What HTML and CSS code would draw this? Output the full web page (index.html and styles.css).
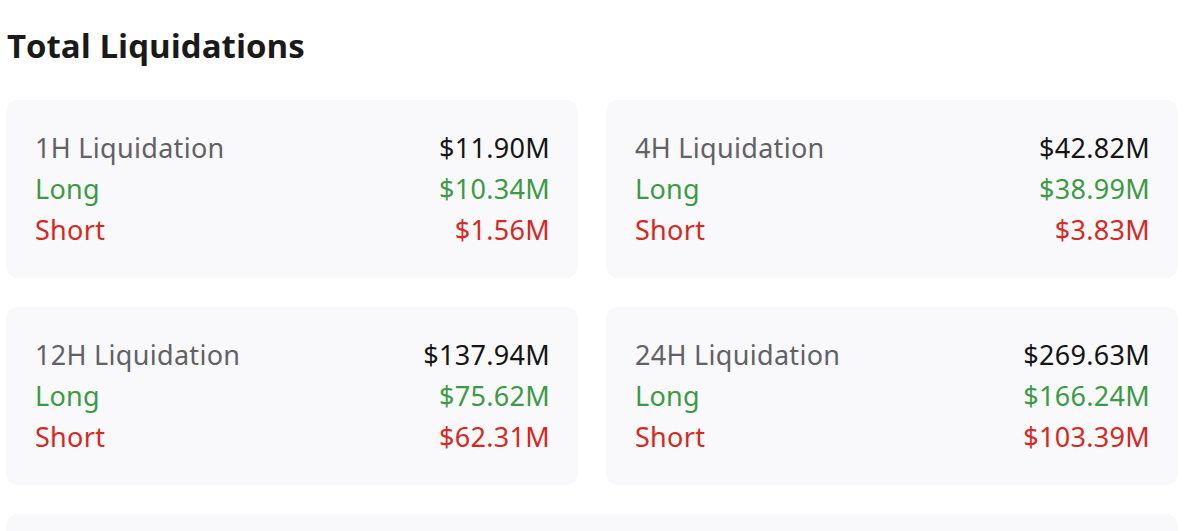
FILE: index.html
```html
<!DOCTYPE html>
<html lang="en">
<head>
<meta charset="utf-8">
<title>Total Liquidations</title>
<link rel="stylesheet" href="styles.css">
</head>
<body>
<main class="page">
  <h1 class="title">Total Liquidations</h1>
  <section class="grid">
    <div class="card">
      <div class="row"><span class="label">1H Liquidation</span><span class="value">$11.90M</span></div>
      <div class="row long"><span>Long</span><span>$10.34M</span></div>
      <div class="row short"><span>Short</span><span>$1.56M</span></div>
    </div>
    <div class="card">
      <div class="row"><span class="label">4H Liquidation</span><span class="value">$42.82M</span></div>
      <div class="row long"><span>Long</span><span>$38.99M</span></div>
      <div class="row short"><span>Short</span><span>$3.83M</span></div>
    </div>
    <div class="card">
      <div class="row"><span class="label">12H Liquidation</span><span class="value">$137.94M</span></div>
      <div class="row long"><span>Long</span><span>$75.62M</span></div>
      <div class="row short"><span>Short</span><span>$62.31M</span></div>
    </div>
    <div class="card">
      <div class="row"><span class="label">24H Liquidation</span><span class="value">$269.63M</span></div>
      <div class="row long"><span>Long</span><span>$166.24M</span></div>
      <div class="row short"><span>Short</span><span>$103.39M</span></div>
    </div>
    <div class="card card-wide"></div>
  </section>
</main>
</body>
</html>
```

FILE: styles.css
```css
html, body {
  margin: 0;
  padding: 0;
  background: #ffffff;
  overflow: hidden;
}

.page {
  width: 1172px;
  padding: 0 0 0 6px;
  font-family: "Noto Sans", "Liberation Sans", sans-serif;
}

.title {
  margin: 0;
  padding: 26px 0 0 1px;
  height: 100px;
  box-sizing: border-box;
  font-family: "Open Sans", "Noto Sans", sans-serif;
  font-weight: 700;
  font-size: 33px;
  line-height: 40px;
  color: #1a1a1a;
}

.grid {
  display: grid;
  grid-template-columns: 1fr 1fr;
  column-gap: 28px;
  row-gap: 29px;
}

.card {
  background: #f9f9fb;
  border-radius: 12px;
  height: 178px;
  box-sizing: border-box;
  padding: 27px 28px 0 29px;
}

.card-wide {
  grid-column: 1 / 3;
}

.row {
  display: flex;
  justify-content: space-between;
  font-size: 27px;
  line-height: 41px;
  letter-spacing: 0.3px;
  color: #1a1a1a;
}

.label {
  color: #616166;
}

.value {
  color: #151515;
}

.long {
  color: #3c9a44;
}

.short {
  color: #d6281f;
}
```
